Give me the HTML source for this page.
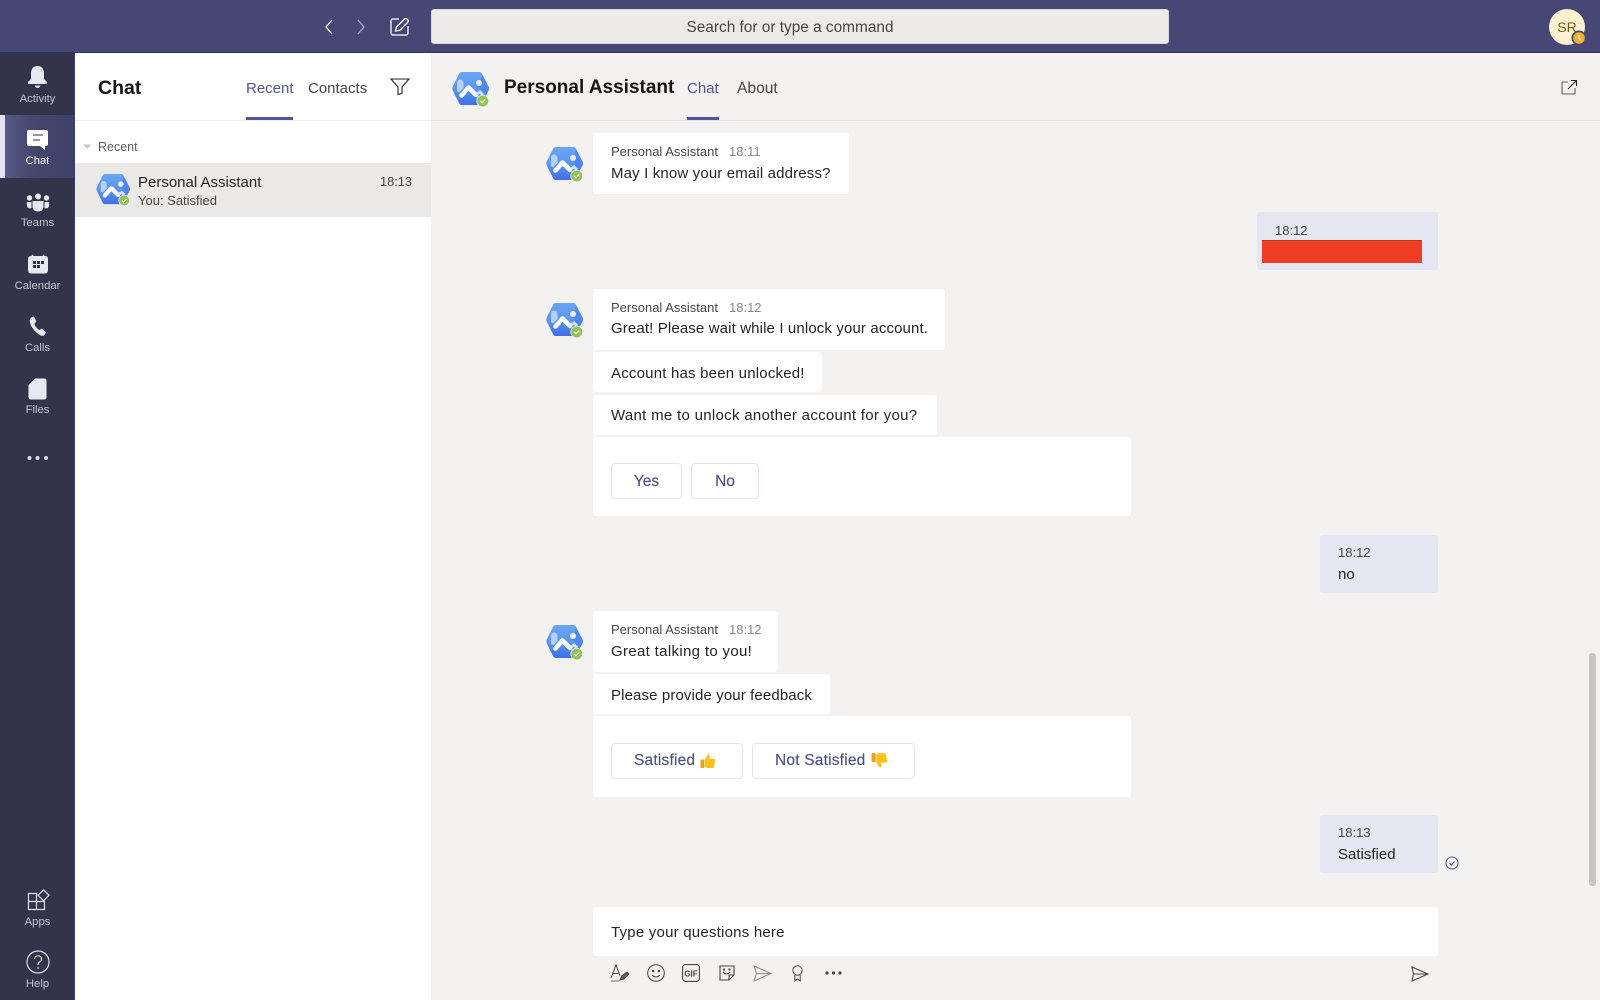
<!DOCTYPE html>
<html lang="en"><head><meta charset="utf-8"><title>Chat</title>
<style>
*{box-sizing:border-box}
html,body{margin:0;padding:0;width:1600px;height:1000px;overflow:hidden;background:#f3f2f1;font-family:"Liberation Sans",sans-serif;color:#252423}
.a{position:absolute}
.t{position:absolute;white-space:nowrap;line-height:20px;height:20px}
.b{position:absolute;background:#fff;border-radius:3px}
.me{position:absolute;background:#e5e6f1;border-radius:3px}
.s{font-size:13px;color:#484644}
.tm{font-size:13px;color:#8a8886}
.m{font-size:15px;color:#252423}
.btn{position:absolute;background:#fff;border:1px solid #e4e2f5;border-radius:4px;color:#4d4f8f;font-size:15.500px;text-align:center;line-height:36px;-webkit-text-stroke:.15px #4d4f8f}
.bt{font-size:15.500px;letter-spacing:.2px;color:#4d4f8f;-webkit-text-stroke:.15px #4d4f8f}
.lab{position:absolute;left:0;width:75px;text-align:center;font-size:11.300px;color:#c4c3d0;line-height:14px}
svg{position:absolute;overflow:visible}
</style></head><body>
<svg width="0" height="0" style="position:absolute"><defs>
<linearGradient id="g" x1="0" y1="0" x2="0" y2="1"><stop offset="0" stop-color="#6aa6f4"/><stop offset=".5" stop-color="#5b96f0"/><stop offset="1" stop-color="#3f6ee8"/></linearGradient>
<g id="av">
<path d="M9.500 0H27.500Q29 0 30 2L36.500 14.500Q37.500 16.500 36.500 18.500L30 31Q29 33 27.500 33H9.500Q8 33 7 31L.8 18.500Q-.2 16.500 .8 14.500L7 2Q8 0 9.500 0Z" fill="url(#g)"/>
<path d="M30 2L36.500 14.500Q37.500 16.500 36.500 18.500L34 23L27 15Z" fill="#4a7fec" opacity=".7"/>
<path d="M5 11Q5.500 7.500 8 7.500Q11 7.500 11.500 11V16L7 20.500L5 19Z" fill="#b5d0f9"/>
<path d="M9.500 23.500L16.500 15.500L24 23" fill="none" stroke="#fff" stroke-width="4.600" stroke-linecap="round" stroke-linejoin="round"/>
<path d="M25 22L28 20L31 23" fill="none" stroke="#cfe0fb" stroke-width="3"/>
<circle cx="27" cy="11" r="3" fill="#eaf2fe"/>
<circle cx="30.700" cy="29" r="6.300" fill="#f3f2f1"/>
<circle cx="30.700" cy="29" r="5.500" fill="#92c353"/>
<path d="M28.200 29L30 30.700L33.200 27.600" fill="none" stroke="#fff" stroke-width="1.200"/>
</g></defs></svg>

<!-- top bar -->
<div class="a" style="left:0;top:0;width:1600px;height:53px;background:#464775;border-bottom:1px solid #2f3068"></div>
<svg style="left:323px;top:19px" width="12" height="16"><path d="M9 1L3 8L9 15" fill="none" stroke="#fff" stroke-width="1.300"/></svg>
<svg style="left:355px;top:19px" width="12" height="16"><path d="M3 1L9 8L3 15" fill="none" stroke="#a9aacb" stroke-width="1.300"/></svg>
<svg style="left:390px;top:17px" width="20" height="20" viewBox="0 0 20 20"><path d="M9 2H3Q1 2 1 4V16Q1 18 3 18H16Q18 18 18 16V9" fill="none" stroke="#fff" stroke-width="1.300"/><path d="M5.500 14L6.500 10L14.500 2Q16 1 17.500 2.500Q19 4 17.500 5.500L10 13.300Z" fill="none" stroke="#fff" stroke-width="1.300"/></svg>
<div class="a" style="left:431px;top:9px;width:738px;height:35px;background:#edebe9;border-radius:3px;border:1px solid #d8d6de"></div>
<div class="t" style="left:421px;top:18px;width:738px;text-align:center;font-size:15.400px;color:#484644">Search for or type a command</div>
<div class="a" style="left:1549px;top:9px;width:36px;height:36px;border-radius:50%;background:#fdf1cf;color:#7a5c1c;font-size:14px;text-align:center;line-height:36px">SR</div>
<svg style="left:1571px;top:30px" width="16" height="16"><circle cx="8" cy="8" r="7.500" fill="#464775"/><circle cx="8" cy="8" r="5.800" fill="#f2ae2e"/><path d="M8 5V8.300L10 10" fill="none" stroke="#fff" stroke-width="1.200"/></svg>

<!-- sidebar -->
<div class="a" style="left:0;top:53px;width:75px;height:947px;background:#33344a;border-right:1px solid #3b3d7a"></div>
<div class="a" style="left:0;top:115px;width:74px;height:63px;background:linear-gradient(90deg,#5b5c8a,#45466d 45%,#40416a)"></div>
<div class="a" style="left:0;top:115px;width:5px;height:63px;background:#e2e2f6"></div>

<svg style="left:27px;top:65px" width="21" height="24" viewBox="0 0 21 24"><path d="M10.500 1Q16.500 1 17 8V14L20 17Q20.500 19 19 19H2Q.5 19 1 17L4 14V8Q4.500 1 10.500 1Z" fill="#e8e8f0"/><path d="M7.500 20.500H13.500Q12.500 23 10.500 23Q8.500 23 7.500 20.500Z" fill="#e8e8f0"/></svg>
<div class="lab" style="top:92px">Activity</div>
<svg style="left:26px;top:129px" width="23" height="23" viewBox="0 0 23 23"><path d="M3 1H20Q22 1 22 3V15Q22 17 20 17H19V21L14 17H3Q1 17 1 15V3Q1 1 3 1Z" fill="#fff"/><path d="M7 6H17M7 11H14" stroke="#54557d" stroke-width="1.300"/></svg>
<div class="lab" style="top:154px;color:#fff">Chat</div>
<svg style="left:26px;top:193px" width="24" height="19" viewBox="0 0 24 19"><circle cx="12" cy="3.500" r="3" fill="#e8e8f0"/><circle cx="3.500" cy="5" r="2.700" fill="#e8e8f0"/><circle cx="20.500" cy="5" r="2.700" fill="#e8e8f0"/><path d="M.8 9H5.500V15L4 15.500Q.8 15 .8 11.500Z M23.200 9H18.500V15L20 15.500Q23.200 15 23.200 11.500Z" fill="#e8e8f0"/><path d="M6.500 8H17.500V14Q17 18.500 12 18.500Q7 18.500 6.500 14Z" fill="#e8e8f0"/></svg>
<div class="lab" style="top:216px">Teams</div>
<svg style="left:28px;top:254px" width="20" height="21" viewBox="0 0 20 21"><path d="M3 2H17Q20 2 20 5V16Q20 19.500 17 19.500H3Q0 19.500 0 16V5Q0 2 3 2Z" fill="#e8e8f0"/><path d="M4.500 .8V3M15.500 .8V3" stroke="#e8e8f0" stroke-width="1.600"/><path d="M5 7h3v3H5zM9 7h3v3H9zM13 7h3v3h-3zM5 11h3v3H5zM9 11h3v3H9z" fill="#33344a"/></svg>
<div class="lab" style="top:279px">Calendar</div>
<svg style="left:29px;top:316px" width="18" height="21" viewBox="0 0 18 21"><path d="M2 1.500L5 .5L7.500 5.500L5.500 7.500Q6 11.500 10.500 14L13 12.500L17 16.500L15 19.500Q12.500 21 8 17Q1.500 11.500 .8 5.500Q.5 3 2 1.500Z" fill="#e8e8f0"/></svg>
<div class="lab" style="top:341px">Calls</div>
<svg style="left:28px;top:378px" width="19" height="22" viewBox="0 0 19 22"><path d="M7 .5H16Q18.500 .5 18.500 3V19Q18.500 21.500 16 21.500H3Q.5 21.500 .5 19V7Z" fill="#e8e8f0"/></svg>
<div class="lab" style="top:403px">Files</div>
<svg style="left:27px;top:455px" width="22" height="6"><circle cx="2.500" cy="3" r="2" fill="#dcdce6"/><circle cx="10.500" cy="3" r="2" fill="#dcdce6"/><circle cx="19" cy="3" r="2" fill="#dcdce6"/></svg>
<svg style="left:27px;top:889px" width="23" height="23" viewBox="0 0 23 23" fill="none" stroke="#dcdce6" stroke-width="1.200"><path d="M1.500 4.500H9.500V12.500H1.500ZM1.500 12.500H9.500V20.500H1.500ZM9.500 12.500H17.500V20.500H9.500Z"/><path d="M16.500 .8L22 6.300L16.500 11.800L11 6.300Z"/></svg>
<div class="lab" style="top:915px">Apps</div>
<svg style="left:26px;top:950px" width="24" height="24" viewBox="0 0 24 24"><circle cx="12" cy="12" r="11" fill="none" stroke="#dcdce6" stroke-width="1.200"/><path d="M8.500 9Q9 5.800 12 5.800Q15.500 5.800 15.500 9Q15.500 11 13.500 12Q12 13 12 15" fill="none" stroke="#dcdce6" stroke-width="1.200"/><circle cx="12" cy="18" r=".9" fill="#dcdce6"/></svg>
<div class="lab" style="top:977px">Help</div>

<!-- chat list -->
<div class="a" style="left:75px;top:53px;width:356px;height:947px;background:#fff"></div>
<div class="a" style="left:75px;top:120px;width:356px;height:1px;background:#eeedec"></div>
<div class="t" style="left:98px;top:78px;font-size:19.500px;font-weight:700;color:#171717">Chat</div>
<div class="t" style="left:246px;top:79px;font-size:15px;color:#5254a0">Recent</div>
<div class="a" style="left:246px;top:117px;width:47px;height:3px;background:#5254a0"></div>
<div class="t" style="left:308px;top:79px;font-size:15px;color:#484644">Contacts</div>
<svg style="left:390px;top:78px" width="20" height="18" viewBox="0 0 20 18"><path d="M1 1H19L12 9V15.500L8 16.500V9Z" fill="none" stroke="#252423" stroke-width="1.100"/></svg>
<svg style="left:83px;top:144px" width="8" height="6"><path d="M0 .5H8L4 5Z" fill="#c8c6c4"/></svg>
<div class="t" style="left:98px;top:137px;font-size:12.500px;color:#605e5c">Recent</div>
<div class="a" style="left:75px;top:163px;width:356px;height:54px;background:#ebe9e7"></div>
<svg style="left:96px;top:174px" width="35" height="32" viewBox="0 0 38 35"><use href="#av"/></svg>
<div class="t" style="left:138px;top:173px;font-size:15px;color:#252423">Personal Assistant</div>
<div class="t" style="left:138px;top:191px;font-size:13px;color:#484644">You: Satisfied</div>
<div class="t" style="left:380px;top:172px;font-size:12.800px;color:#484644">18:13</div>

<!-- header -->
<div class="a" style="left:431px;top:120px;width:1169px;height:1px;background:#e3e1df"></div>
<svg style="left:452px;top:72px" width="38" height="35" viewBox="0 0 38 35"><use href="#av"/></svg>
<div class="t" style="left:504px;top:78px;font-size:19px;font-weight:700;color:#171717">Personal Assistant</div>
<div class="t" style="left:687px;top:79px;font-size:15px;color:#5254a0">Chat</div>
<div class="a" style="left:687px;top:117px;width:32px;height:3px;background:#5254a0"></div>
<div class="t" style="left:737px;top:79px;font-size:15.600px;color:#484644">About</div>
<svg style="left:1561px;top:79px" width="17" height="17" viewBox="0 0 17 17"><path d="M7 3H2Q1 3 1 4V14Q1 15 2 15H13Q14 15 14 14V9" fill="none" stroke="#605e5c" stroke-width="1.100"/><path d="M7 10L15.500 1.500M10 1.500H15.500V7" fill="none" stroke="#252423" stroke-width="1.100"/></svg>

<!-- messages -->
<svg style="left:546px;top:147px" width="38" height="35" viewBox="0 0 38 35"><use href="#av"/></svg>
<div class="b" style="left:593px;top:133px;width:256px;height:61px"></div>
<div class="t s" style="left:611px;top:142px">Personal Assistant</div>
<div class="t tm" style="left:729px;top:142px">18:11</div>
<div class="t m" style="left:611px;top:164px;letter-spacing:.15px">May I know your email address?</div>

<div class="me" style="left:1257px;top:212px;width:181px;height:58px"></div>
<div class="t s" style="left:1275px;top:221px">18:12</div>
<div class="a" style="left:1262px;top:240px;width:160px;height:23px;background:#ef3e23;border-top:1px solid #c9341f"></div>

<svg style="left:546px;top:303px" width="38" height="35" viewBox="0 0 38 35"><use href="#av"/></svg>
<div class="b" style="left:593px;top:289px;width:352px;height:61px"></div>
<div class="t s" style="left:611px;top:298px">Personal Assistant</div>
<div class="t tm" style="left:729px;top:298px">18:12</div>
<div class="t m" style="left:611px;top:319px;letter-spacing:.13px">Great! Please wait while I unlock your account.</div>
<div class="b" style="left:593px;top:352px;width:229px;height:40px"></div>
<div class="t m" style="left:611px;top:364px;letter-spacing:.2px">Account has been unlocked!</div>
<div class="b" style="left:593px;top:395px;width:344px;height:40px"></div>
<div class="t m" style="left:611px;top:406px;letter-spacing:.3px">Want me to unlock another account for you?</div>
<div class="b" style="left:593px;top:437px;width:538px;height:79px"></div>
<div class="btn" style="left:611px;top:463px;width:71px;height:36px">Yes</div>
<div class="btn" style="left:691px;top:463px;width:68px;height:36px">No</div>

<div class="me" style="left:1320px;top:535px;width:118px;height:58px"></div>
<div class="t s" style="left:1338px;top:543px">18:12</div>
<div class="t m" style="left:1338px;top:565px">no</div>

<svg style="left:546px;top:625px" width="38" height="35" viewBox="0 0 38 35"><use href="#av"/></svg>
<div class="b" style="left:593px;top:611px;width:185px;height:61px"></div>
<div class="t s" style="left:611px;top:620px">Personal Assistant</div>
<div class="t tm" style="left:729px;top:620px">18:12</div>
<div class="t m" style="left:611px;top:642px;letter-spacing:.33px">Great talking to you!</div>
<div class="b" style="left:593px;top:674px;width:237px;height:40px"></div>
<div class="t m" style="left:611px;top:686px;letter-spacing:.12px">Please provide your feedback</div>
<div class="b" style="left:593px;top:716px;width:538px;height:81px"></div>
<div class="btn" style="left:611px;top:743px;width:132px;height:36px"></div>
<div class="t bt" style="left:634px;top:751px">Satisfied</div>
<svg style="left:700px;top:753px" width="16" height="16" viewBox="0 0 16 16"><path d="M5 6L8 1.500Q9.500 1 9.800 3L9.300 6H14.500Q15.500 6.500 15 8L14 14Q13.500 15 12.500 15H7L5 14Z" fill="#fcc21b"/><rect x=".5" y="6.500" width="4" height="8.500" rx="1" fill="#e8a316"/></svg>
<div class="btn" style="left:752px;top:743px;width:163px;height:36px"></div>
<div class="t bt" style="left:775px;top:751px">Not Satisfied</div>
<svg style="left:871px;top:752px" width="17" height="17" viewBox="0 0 16 16"><path d="M5 10L8 14.500Q9.500 15 9.800 13L9.300 10H14.500Q15.500 9.500 15 8L14 2Q13.500 1 12.500 1H7L5 2Z" fill="#fcc21b"/><rect x=".5" y="1" width="4" height="8.500" rx="1" fill="#e8a316"/></svg>

<div class="me" style="left:1320px;top:815px;width:118px;height:58px"></div>
<div class="t s" style="left:1338px;top:823px">18:13</div>
<div class="t m" style="left:1338px;top:845px">Satisfied</div>
<svg style="left:1445px;top:856px" width="14" height="14"><circle cx="7" cy="7" r="6" fill="none" stroke="#5254a0" stroke-width="1.100"/><path d="M4.500 7.200L6.300 9L9.600 5.600" fill="none" stroke="#5254a0" stroke-width="1.100"/></svg>

<div class="a" style="left:1589px;top:653px;width:7px;height:233px;background:#c8c6c4;border-radius:3px"></div>

<!-- compose -->
<div class="b" style="left:593px;top:907px;width:845px;height:49px"></div>
<div class="t m" style="left:611px;top:923px;letter-spacing:.22px">Type your questions here</div>

<svg style="left:610px;top:963px" width="20" height="20" viewBox="0 0 20 20" fill="none" stroke="#484644" stroke-width="1"><path d="M1 15L6 2L10 13M2.500 10.500H8.500"/><path d="M1 18H9" stroke-width=".8"/><path d="M10 17L12 13L17 9L19 11L14 16Z" fill="#605e5c"/></svg>
<svg style="left:647px;top:964px" width="18" height="18" viewBox="0 0 18 18" fill="none" stroke="#484644"><circle cx="9" cy="9" r="8.300"/><path d="M5 11Q9 15 13 11"/><circle cx="6" cy="7" r=".8" fill="#484644"/><circle cx="12" cy="7" r=".8" fill="#484644"/></svg>
<svg style="left:682px;top:964px" width="18" height="18" viewBox="0 0 18 18"><rect x=".6" y=".6" width="16.800" height="16.800" rx="3" fill="none" stroke="#484644" stroke-width="1.100"/><text x="9" y="12.300" font-size="8" font-weight="700" text-anchor="middle" fill="#484644" font-family="Liberation Sans">GIF</text></svg>
<svg style="left:719px;top:965px" width="16" height="16" viewBox="0 0 16 16" fill="none" stroke="#484644" stroke-width="1.100"><path d="M1 1H15V10L10 15H1Z"/><path d="M10 15V10H15"/><path d="M4 7Q7.500 11 11 7"/><circle cx="5" cy="4.500" r=".6" fill="#484644"/><circle cx="10.500" cy="4.500" r=".6" fill="#484644"/></svg>
<svg style="left:753px;top:965px" width="19" height="17" viewBox="0 0 19 17" fill="none" stroke="#8a8886"><path d="M1 1L18 8.500L1 16L3.500 8.500ZM3.500 8.500H18"/></svg>
<svg style="left:792px;top:965px" width="11" height="17" viewBox="0 0 11 17" fill="none" stroke="#484644"><circle cx="5.500" cy="5.500" r="4.700"/><path d="M2.800 10V16L5.500 14L8.200 16V10"/></svg>
<svg style="left:825px;top:971px" width="17" height="4"><circle cx="2" cy="2" r="1.600" fill="#484644"/><circle cx="8.500" cy="2" r="1.600" fill="#484644"/><circle cx="15" cy="2" r="1.600" fill="#484644"/></svg>
<svg style="left:1411px;top:966px" width="18" height="16" viewBox="0 0 18 16" fill="none" stroke="#484644" stroke-width="1.100"><path d="M1 1L17 8L1 15L2.500 8ZM2.500 8H17"/></svg>
</body></html>
